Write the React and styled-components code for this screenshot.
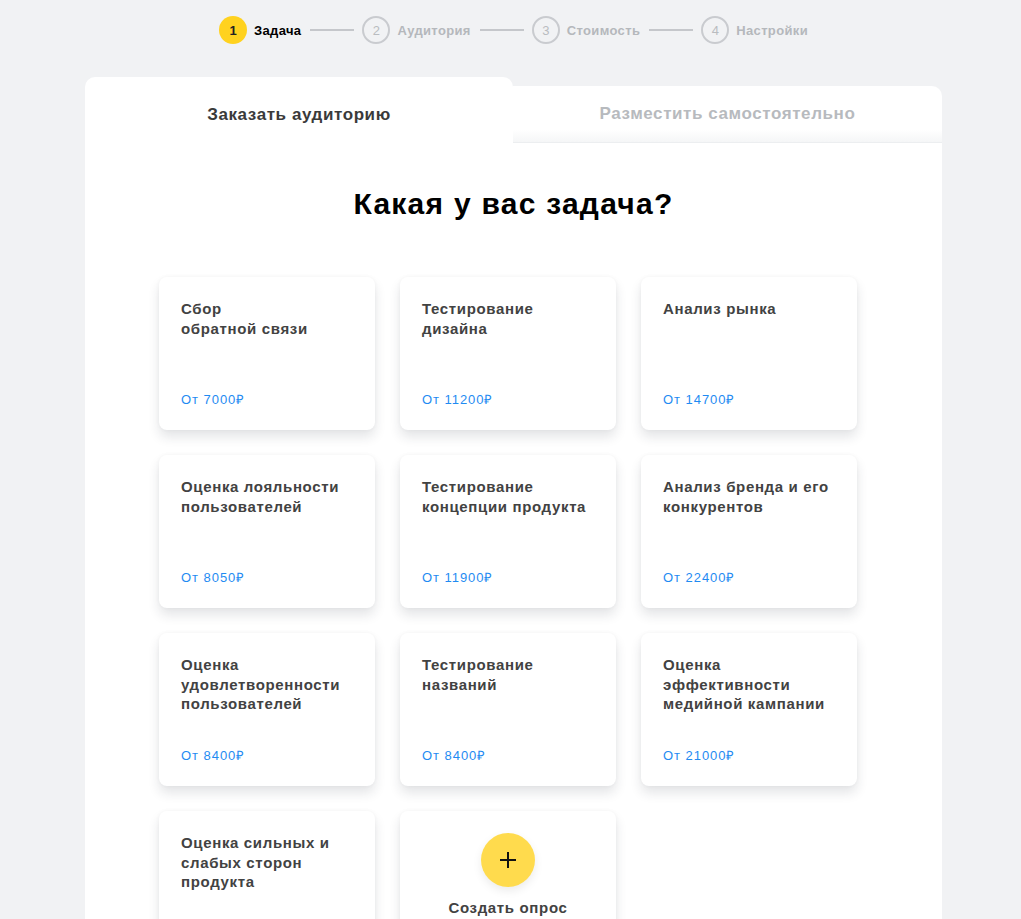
import React from "react";
import styled, { createGlobalStyle } from "styled-components";

const GlobalStyle = createGlobalStyle`
  html, body {
    margin: 0;
    padding: 0;
    background: #f1f2f4;
    font-family: "Liberation Sans", Arial, sans-serif;
  }
  * { box-sizing: border-box; }
`;

const steps = ["Задача", "Аудитория", "Стоимость", "Настройки"];

const tasks = [
  { title: "Сбор\nобратной связи", price: "От 7000₽" },
  { title: "Тестирование\nдизайна", price: "От 11200₽" },
  { title: "Анализ рынка", price: "От 14700₽" },
  { title: "Оценка лояльности\nпользователей", price: "От 8050₽" },
  { title: "Тестирование\nконцепции продукта", price: "От 11900₽" },
  { title: "Анализ бренда и его\nконкурентов", price: "От 22400₽" },
  { title: "Оценка\nудовлетворенности\nпользователей", price: "От 8400₽" },
  { title: "Тестирование\nназваний", price: "От 8400₽" },
  { title: "Оценка\nэффективности\nмедийной кампании", price: "От 21000₽" },
  { title: "Оценка сильных и\nслабых сторон\nпродукта", price: "" },
];

const Page = styled.div`
  display: flex;
  flex-direction: column;
  align-items: center;
  padding-top: 16px;
`;

const Stepper = styled.div`
  display: flex;
  align-items: center;
  height: 28px;
  margin-left: 6px;
`;

const Step = styled.div`
  display: flex;
  align-items: center;
  gap: 7px;
`;

const StepCircle = styled.div`
  width: 28px;
  height: 28px;
  border-radius: 50%;
  display: flex;
  align-items: center;
  justify-content: center;
  font-size: 13px;
  font-weight: ${(p) => (p.active ? 700 : 400)};
  color: ${(p) => (p.active ? "#222" : "#b9bcc0")};
  background: ${(p) => (p.active ? "#ffd21f" : "transparent")};
  border: ${(p) => (p.active ? "none" : "2px solid #c9cbcf")};
`;

const StepLabel = styled.span`
  font-size: 13px;
  letter-spacing: 0.35px;
  font-weight: 700;
  color: ${(p) => (p.active ? "#000" : "#b5b8bc")};
`;

const StepLine = styled.div`
  width: 44px;
  height: 2px;
  background: #c5c7cb;
  margin: 0 8px 0 9px;
`;

const Panel = styled.div`
  width: 857px;
  margin-top: 33px;
  margin-left: 6px;
  display: flex;
  flex-direction: column;
`;

const Tabs = styled.div`
  display: flex;
  align-items: flex-end;
`;

const Tab = styled.div`
  flex: ${(p) => (p.active ? "0 0 428px" : "1 1 auto")};
  height: ${(p) => (p.active ? "66px" : "57px")};
  padding-top: ${(p) => (p.active ? "9px" : "0")};
  display: flex;
  align-items: center;
  justify-content: center;
  background: ${(p) => (p.active ? "#fff" : "linear-gradient(to bottom, #fff 78%, #f5f6f7 100%)")};
  border-radius: ${(p) => (p.active ? "10px 10px 0 0" : "0 10px 0 0")};
  border-bottom: ${(p) => (p.active ? "none" : "1px solid #eceef0")};
  font-size: 17px;
  letter-spacing: 0.58px;
  font-weight: 700;
  color: ${(p) => (p.active ? "#3a3a3a" : "#b7babe")};
`;

const Body = styled.div`
  background: #fff;
  padding: 44px 85px 40px 74px;
  display: flex;
  flex-direction: column;
`;

const Title = styled.h1`
  margin: 0 0 56px 11px;
  font-size: 30px;
  line-height: 34px;
  letter-spacing: 1.25px;
  font-weight: 700;
  color: #000;
  text-align: center;
`;

const Grid = styled.div`
  display: grid;
  grid-template-columns: repeat(3, 216px);
  grid-auto-rows: 153px;
  gap: 25px;
`;

const Card = styled.div`
  background: #fff;
  border-radius: 8px;
  box-shadow: 0 7px 12px rgba(30, 40, 60, 0.12), 0 0 4px rgba(30, 40, 60, 0.04);
  padding: 22px;
  display: flex;
  flex-direction: column;
  justify-content: ${(p) => (p.center ? "flex-start" : "space-between")};
  align-items: ${(p) => (p.center ? "center" : "stretch")};
`;

const CardTitle = styled.div`
  font-size: 15px;
  line-height: 19.5px;
  letter-spacing: 0.65px;
  font-weight: 700;
  color: #424242;
  white-space: pre-line;
`;

const Price = styled.div`
  font-size: 13px;
  line-height: 16px;
  letter-spacing: 0.95px;
  color: #1f8bf2;
`;

const PlusButton = styled.div`
  width: 54px;
  height: 54px;
  border-radius: 50%;
  background: #ffdb4d;
  box-shadow: 0 4px 10px rgba(0, 0, 0, 0.08);
  display: flex;
  align-items: center;
  justify-content: center;
`;

const CreateLabel = styled.div`
  font-size: 15px;
  letter-spacing: 0.65px;
  font-weight: 700;
  color: #424242;
  margin-top: 12px;
`;

export default function App() {
  return (
    <>
      <GlobalStyle />
      <Page>
        <Stepper>
          {steps.map((s, i) => (
            <React.Fragment key={s}>
              {i > 0 && <StepLine />}
              <Step>
                <StepCircle active={i === 0}>{i + 1}</StepCircle>
                <StepLabel active={i === 0}>{s}</StepLabel>
              </Step>
            </React.Fragment>
          ))}
        </Stepper>
        <Panel>
          <Tabs>
            <Tab active>Заказать аудиторию</Tab>
            <Tab>Разместить самостоятельно</Tab>
          </Tabs>
          <Body>
            <Title>Какая у вас задача?</Title>
            <Grid>
              {tasks.map((t) => (
                <Card key={t.title}>
                  <CardTitle>{t.title}</CardTitle>
                  {t.price && <Price>{t.price}</Price>}
                </Card>
              ))}
              <Card center>
                <PlusButton>
                  <svg width="18" height="18" viewBox="0 0 18 18">
                    <path d="M9 1v16M1 9h16" stroke="#111" strokeWidth="2" />
                  </svg>
                </PlusButton>
                <CreateLabel>Создать опрос</CreateLabel>
              </Card>
            </Grid>
          </Body>
        </Panel>
      </Page>
    </>
  );
}
